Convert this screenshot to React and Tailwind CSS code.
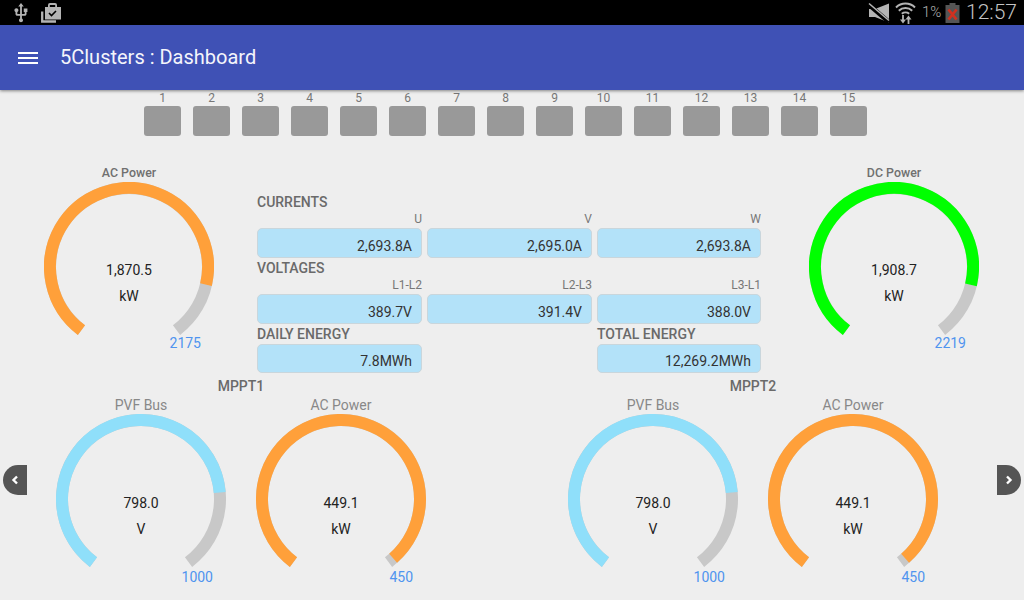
import React from "react";

const polar = (r, deg) => {
  const a = ((deg - 90) * Math.PI) / 180;
  return [85 + r * Math.cos(a), 85 + r * Math.sin(a)];
};
const arc = (from, to) => {
  const [x1, y1] = polar(79, from);
  const [x2, y2] = polar(79, to);
  const large = to - from > 180 ? 1 : 0;
  return `M ${x1} ${y1} A 79 79 0 ${large} 1 ${x2} ${y2}`;
};

function Gauge({ title, value, unit, max, ratio, color, small }) {
  const start = -143;
  const span = 286;
  const mid = start + span * ratio;
  return (
    <div className="w-[170px] shrink-0">
      <div
        className={
          small
            ? "h-4 mb-px text-center text-sm leading-4 text-[#888888]"
            : "h-4 mb-px text-center text-[12.4px] leading-[15px] font-medium text-[#707070]"
        }
      >
        {title}
      </div>
      <div className="relative w-[170px] h-[170px]">
        <svg width="170" height="170" viewBox="0 0 170 170" fill="none">
          <path d={arc(start, start + span)} stroke="#c8c8c8" strokeWidth="12" />
          <path d={arc(start, mid)} stroke={color} strokeWidth="12" />
        </svg>
        <div className={"absolute left-0 right-0 h-5 text-center text-sm leading-5 text-[#222222] " + (small ? "top-[79px]" : "top-[78px]")}>{value}</div>
        <div className={"absolute left-0 right-0 h-5 text-center text-sm leading-5 text-[#222222] " + (small ? "top-[105px]" : "top-[104px]")}>{unit}</div>
        <div className={"absolute left-[97px] w-[60px] h-5 text-right text-sm leading-5 text-[#4f94ef] " + (small ? "top-[153px]" : "top-[151px]")}>{max}</div>
      </div>
    </div>
  );
}

const Heading = ({ children, className = "" }) => (
  <div className={"h-4 text-sm leading-4 font-medium text-[#6a6a6a] " + className}>{children}</div>
);
const Sub = ({ children, className = "w-[165px]" }) => (
  <div className={"h-4 text-right text-xs leading-4 text-[#777777] " + className}>{children}</div>
);
const Box = ({ children, className = "h-[30px] w-[165px]" }) => (
  <div className={"rounded-[5px] border border-[#c9d6dc] bg-[#b3e2f9] pr-[9px] flex items-end justify-end pb-px text-sm leading-5 text-[#333333] " + className}>
    {children}
  </div>
);

function Group({ name, gauges }) {
  return (
    <div className="w-[370px] shrink-0">
      <div className="h-4 text-center text-sm leading-4 font-medium text-[#6a6a6a]">{name}</div>
      <div className="mt-[3px] flex gap-[30px]">{gauges}</div>
    </div>
  );
}

function StatusBar() {
  return (
    <div className="h-[25px] bg-black flex items-center text-[#b4b4b4]">
      <svg className="ml-[10px]" width="22" height="22" viewBox="0 0 24 24" fill="#b4b4b4">
        <path d="M15 7v4h1v2h-3V5h2l-3-4-3 4h2v8H8v-2.07c.7-.37 1.2-1.08 1.2-1.93 0-1.21-.99-2.2-2.2-2.2-1.21 0-2.2.99-2.2 2.2 0 .85.5 1.56 1.2 1.93V13c0 1.11.89 2 2 2h3v3.05c-.71.37-1.2 1.1-1.2 1.95 0 1.22.99 2.2 2.2 2.2 1.21 0 2.2-.98 2.2-2.2 0-.85-.49-1.58-1.2-1.95V15h3c1.11 0 2-.89 2-2v-2h1V7h-4z" />
      </svg>
      <svg className="ml-[8px]" width="22" height="22" viewBox="0 0 22 22" fill="none">
        <path d="M2.2 9.5v10h13.8" stroke="#b4b4b4" strokeWidth="2.3" />
        <path d="M5 5h3V3a2 2 0 0 1 2-2h5a2 2 0 0 1 2 2v2h4v12.5H5Z" fill="#b4b4b4" />
        <path d="M9.8 5V3h5.4v2Z" fill="#000" />
        <path d="m9 11 2.5 2.5 4.5-4.5" stroke="#000" strokeWidth="1.6" />
      </svg>
      <div className="ml-auto flex items-center">
        <svg width="22" height="22" viewBox="0 0 22 22" fill="#b4b4b4">
          <path d="M1 7h6l14-5.5v19L7 15H1Z" />
          <path d="M1 3 21 20" stroke="#000" strokeWidth="4.5" />
          <path d="M1 1.5 21 18.5" stroke="#b4b4b4" strokeWidth="1.6" />
        </svg>
        <svg className="ml-[5px]" width="21" height="23" viewBox="0 0 21 23" fill="none" stroke="#b4b4b4" strokeWidth="2">
          <path d="M1 6.5c5.3-5.2 13.7-5.2 19 0" />
          <path d="M3.8 9.7c3.7-3.5 9.7-3.5 13.4 0" />
          <path d="M6.8 12.7c2-1.6 5.4-1.6 7.4 0" />
          <path d="M8 14v5" strokeWidth="1.8" />
          <path d="M13.5 23v-6" strokeWidth="1.8" />
          <path d="M5 18.5h6L8 22.5Z" fill="#b4b4b4" stroke="none" />
          <path d="M10.5 18.5h6l-3-4Z" fill="#b4b4b4" stroke="none" />
        </svg>
        <span className="ml-[6px] w-[19px] text-[15px] leading-none font-light">1%</span>
        <svg className="ml-[4px]" width="15" height="21" viewBox="0 0 15 21">
          <path d="M0.5 3h4V1h6v2h4v18h-14Z" fill="#555555" />
          <path d="m3.5 7.5 8 10M11.5 7.5l-8 10" stroke="#d0301f" strokeWidth="2.8" />
        </svg>
        <span className="ml-[6px] mr-[7px] text-[21px] leading-none font-light text-[#c4c4c4]">12:57</span>
      </div>
    </div>
  );
}

export default function App() {
  const nums = Array.from({ length: 15 }, (_, i) => i + 1);
  return (
    <div className="relative w-[1024px] h-[600px] overflow-hidden bg-[#eeeeee] font-['Roboto',sans-serif]">
      <StatusBar />
      <header className="relative z-10 h-[65px] bg-[#3f51b5] flex items-center shadow-[0_1px_3px_rgba(0,0,0,0.45)]">
        <div className="ml-[18px] w-5 flex flex-col gap-[3px]">
          <div className="h-[2px] bg-white" />
          <div className="h-[2px] bg-white" />
          <div className="h-[2px] bg-white" />
        </div>
        <h1 className="ml-[22px] mb-[2px] text-[20px] font-normal leading-none text-[#f4f5fb]">5Clusters : Dashboard</h1>
      </header>

      <div className="ml-[144px] flex gap-3">
        {nums.map((n) => (
          <div key={n} className="w-[37px]">
            <div className="h-4 text-center text-xs leading-4 text-[#777777]">{n}</div>
            <div className="h-[30px] rounded-[3px] bg-[#999999]" />
          </div>
        ))}
      </div>

      <div className="mt-[29px] ml-[44px] flex h-[208px]">
        <Gauge title="AC Power" value="1,870.5" unit="kW" max="2175" ratio={1870.5 / 2175} color="#ffa03a" />
        <div className="ml-[43px] w-[505px] pt-[29px]">
          <Heading>CURRENTS</Heading>
          <div className="mt-px flex gap-[5px]"><Sub>U</Sub><Sub>V</Sub><Sub className="w-[164px]">W</Sub></div>
          <div className="mt-px flex gap-[5px]">
            <Box>2,693.8A</Box><Box>2,695.0A</Box><Box className="h-[30px] w-[164px]">2,693.8A</Box>
          </div>
          <Heading className="mt-[2px]">VOLTAGES</Heading>
          <div className="mt-px flex gap-[5px]"><Sub>L1-L2</Sub><Sub>L2-L3</Sub><Sub className="w-[164px]">L3-L1</Sub></div>
          <div className="mt-px flex gap-[5px]">
            <Box>389.7V</Box><Box>391.4V</Box><Box className="h-[30px] w-[164px]">388.0V</Box>
          </div>
          <div className="mt-[2px] flex gap-[175px]">
            <Heading className="w-[165px]">DAILY ENERGY</Heading>
            <Heading className="w-[165px]">TOTAL ENERGY</Heading>
          </div>
          <div className="mt-[2px] flex gap-[175px]">
            <Box className="h-[29px] w-[165px]">7.8MWh</Box>
            <Box className="h-[29px] w-[164px]">12,269.2MWh</Box>
          </div>
        </div>
        <div className="ml-[47px]">
          <Gauge title="DC Power" value="1,908.7" unit="kW" max="2219" ratio={1908.7 / 2219} color="#00ff00" />
        </div>
      </div>

      <div className="mt-[5px] ml-[56px] flex gap-[142px]">
        <Group
          name="MPPT1"
          gauges={
            <>
              <Gauge small title="PVF Bus" value="798.0" unit="V" max="1000" ratio={0.798} color="#8fdffa" />
              <Gauge small title="AC Power" value="449.1" unit="kW" max="450" ratio={0.985} color="#ffa03a" />
            </>
          }
        />
        <Group
          name="MPPT2"
          gauges={
            <>
              <Gauge small title="PVF Bus" value="798.0" unit="V" max="1000" ratio={0.798} color="#8fdffa" />
              <Gauge small title="AC Power" value="449.1" unit="kW" max="450" ratio={0.985} color="#ffa03a" />
            </>
          }
        />
      </div>

      <div className="absolute left-[3px] top-[465px] w-6 h-[30px] rounded-l-[15px] bg-[#555555] flex items-center justify-center">
        <svg width="8" height="10" viewBox="0 0 8 10" fill="none" stroke="#ffffff" strokeWidth="2.4"><path d="M6 1.5 2.5 5 6 8.5" /></svg>
      </div>
      <div className="absolute left-[997px] top-[465px] w-6 h-[30px] rounded-r-[15px] bg-[#555555] flex items-center justify-center">
        <svg width="8" height="10" viewBox="0 0 8 10" fill="none" stroke="#ffffff" strokeWidth="2.4"><path d="M2 1.5 5.5 5 2 8.5" /></svg>
      </div>
    </div>
  );
}
